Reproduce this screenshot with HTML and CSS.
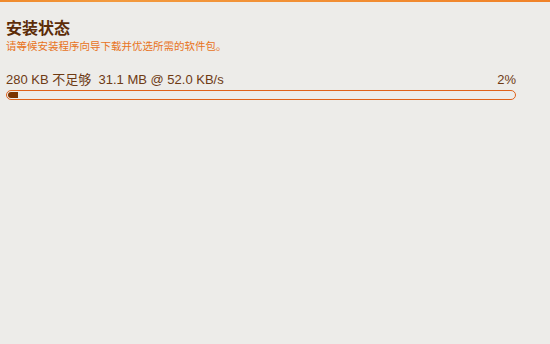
FILE: index.html
```html
<!DOCTYPE html>
<html lang="zh-CN">
<head>
    <meta charset="UTF-8">
    <title>安装状态</title>
    <link rel="stylesheet" href="styles.css">
</head>
<body>
    <div class="topline"></div>
    <div class="page">
        <div class="header">
            <h2>安装状态</h2>
            <p class="sub">请等候安装程序向导下载并优选所需的软件包。</p>
        </div>

        <!-- 下载进度 -->
        <div class="status">
            <span>280 KB 不足够&nbsp; 31.1 MB @ 52.0 KB/s</span>
            <span>2%</span>
        </div>
        <div class="bar">
            <div class="fill" style="width: 2%"></div>
        </div>
    </div>
</body>
</html>
```

FILE: styles.css
```css
body {
    margin: 0;
    background-color: #edece9;
    font-family: "Liberation Sans", Arial, "Noto Sans CJK SC", sans-serif;
}
.topline {
    height: 2px;
    background: linear-gradient(to right, #f08a2c, #f39a3e 20%, #f08228);
}
.page {
    padding: 17px 34px 0 6px;
}
h2 {
    margin: 0;
    font-size: 16px;
    line-height: 19px;
    color: #5c2c08;
    font-weight: bold;
}
.sub {
    margin: 2px 0 0 0;
    font-size: 10.5px;
    line-height: 13px;
    color: #e8731c;
}
.status {
    display: flex;
    justify-content: space-between;
    margin-top: 19px;
    font-size: 13px;
    line-height: 16px;
    color: #6e3a14;
}
.bar {
    margin-top: 2px;
    height: 6px;
    border: 1px solid #e0621a;
    border-radius: 5px;
    padding: 1px;
}
.fill {
    height: 6px;
    background-color: #7a3300;
    border-radius: 3px 0 0 3px;
}
```
